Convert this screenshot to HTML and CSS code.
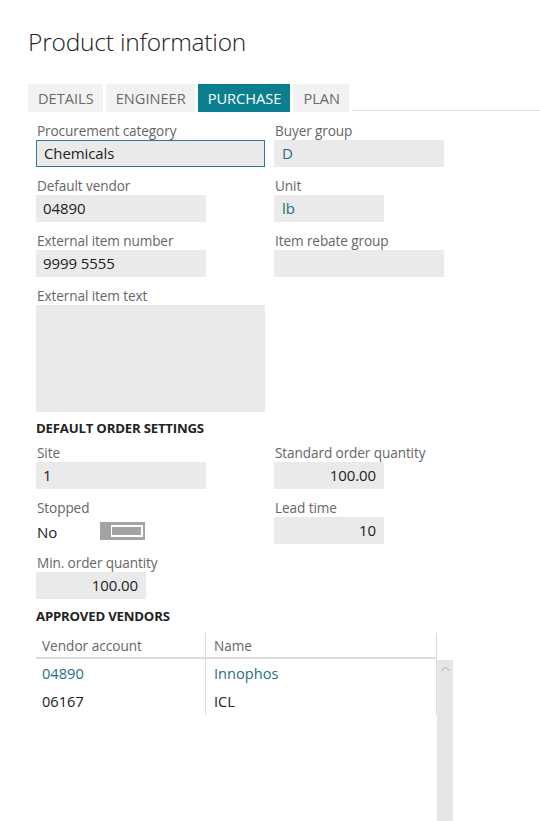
FILE: index.html
```html
<!DOCTYPE html>
<html>
<head>
<meta charset="utf-8">
<link rel="stylesheet" href="styles.css">
</head>
<body>
<div class="page">
  <h1 class="title">Product information</h1>
  <div class="tabs">
    <div class="tab">DETAILS</div>
    <div class="tab">ENGINEER</div>
    <div class="tab active">PURCHASE</div>
    <div class="tab">PLAN</div>
    <div class="tab-rule"></div>
  </div>

  <div class="form">
    <div class="grid">
      <div class="field">
        <div class="label">Procurement category</div>
        <div class="input w230 focused">Chemicals</div>
      </div>
      <div class="field">
        <div class="label">Buyer group</div>
        <div class="input w170 link">D</div>
      </div>
      <div class="field">
        <div class="label">Default vendor</div>
        <div class="input w170">04890</div>
      </div>
      <div class="field">
        <div class="label">Unit</div>
        <div class="input w110 link">lb</div>
      </div>
      <div class="field">
        <div class="label">External item number</div>
        <div class="input w170">9999 5555</div>
      </div>
      <div class="field">
        <div class="label">Item rebate group</div>
        <div class="input w170"></div>
      </div>
      <div class="field">
        <div class="label">External item text</div>
        <div class="input w230 textarea"></div>
      </div>
    </div>

    <div class="section">DEFAULT ORDER SETTINGS</div>

    <div class="grid grid2">
      <div class="field">
        <div class="label">Site</div>
        <div class="input w170">1</div>
      </div>
      <div class="field">
        <div class="label">Standard order quantity</div>
        <div class="input w110 num">100.00</div>
      </div>
      <div class="field">
        <div class="label">Stopped</div>
        <div class="toggle-row">
          <span class="toggle-text">No</span>
          <span class="toggle"><span class="toggle-track"></span></span>
        </div>
      </div>
      <div class="field">
        <div class="label">Lead time</div>
        <div class="input w110 num">10</div>
      </div>
      <div class="field">
        <div class="label">Min. order quantity</div>
        <div class="input w110 num">100.00</div>
      </div>
    </div>

    <div class="section sec2">APPROVED VENDORS</div>

    <div class="table-wrap">
      <div class="table">
        <div class="row head">
          <div class="cell c1">Vendor account</div>
          <div class="cell c2">Name</div>
        </div>
        <div class="row">
          <div class="cell c1 link">04890</div>
          <div class="cell c2 link">Innophos</div>
        </div>
        <div class="row">
          <div class="cell c1">06167</div>
          <div class="cell c2">ICL</div>
        </div>
      </div>
      <div class="scrollbar">
        <svg class="chev" width="9" height="6" viewBox="0 0 9 6"><path d="M0.5 5 L4.5 1 L8.5 5" fill="none" stroke="#a8a8a8" stroke-width="1"/></svg>
      </div>
    </div>
  </div>
</div>
</body>
</html>
```

FILE: styles.css
```css
* { box-sizing: border-box; }
html, body { margin: 0; padding: 0; background: #fff; }
body {
  font-family: "Open Sans", "Noto Sans", sans-serif;
  color: #222;
  width: 540px;
  height: 821px;
  overflow: hidden;
}
.page { padding: 0 0 0 28px; }
.title {
  margin: 0;
  padding-top: 25px;
  height: 84px;
  font-weight: 300;
  font-size: 24.5px;
  line-height: 34px;
  color: #222;
  letter-spacing: -0.2px;
}
.tabs {
  display: flex;
  align-items: stretch;
  height: 28px;
  gap: 3px;
}
.tab {
  background: #f2f2f2;
  color: #6b6b6b;
  font-size: 14.6px;
  line-height: 28px;
  padding: 0 9px 0 10px;
  letter-spacing: 0;
}
.tab.active { background: #0b7f90; color: #fff; }
.tab-rule {
  flex: 1;
  border-bottom: 1px solid #e3e3e3;
  margin-bottom: 1px;
}
.form { padding: 9px 0 0 8px; }
.grid {
  display: grid;
  grid-template-columns: 238px 1fr;
  row-gap: 9px;
}
.field { display: flex; flex-direction: column; align-items: flex-start; }
.label {
  font-size: 13.6px;
  line-height: 19px;
  color: #666;
  padding-left: 1px;
  letter-spacing: -0.1px;
}
.input {
  height: 27px;
  background: #eaeaea;
  font-size: 15px;
  line-height: 27px;
  padding: 0 8px 0 7px;
  color: #222;
  letter-spacing: -0.1px;
}
.input.focused { border: 1px solid #2a7d8e; line-height: 25px; padding-left: 7px; }
.w230 { width: 229px; }
.w170 { width: 170px; }
.w110 { width: 110px; }
.num { text-align: right; }
.link { color: #1f6e82; }
.input.link { padding-left: 8px; }
.textarea { height: 107px; }
.section {
  font-size: 13.2px;
  font-weight: 700;
  color: #222;
  line-height: 19px;
  margin: 7px 0 5px;
  letter-spacing: -0.2px;
}
.sec2 { margin: 8px 0 7px; }
.toggle-row {
  height: 27px;
  display: flex;
  align-items: center;
  width: 170px;
}
.toggle-text {
  font-size: 15px;
  width: 64px;
  padding-left: 1px;
  padding-top: 3px;
}
.toggle {
  width: 45px;
  height: 18px;
  background: #a3a3a3;
  position: relative;
  display: block;
}
.toggle-track {
  position: absolute;
  left: 11px;
  top: 3px;
  width: 32px;
  height: 12px;
  border: 2px solid #fff;
  border-left-width: 1px;
}
.table-wrap { display: flex; width: 417px; height: 189px; }
.table {
  width: 401px;
  align-self: flex-start;
  border-right: 1px solid #dcdcdc;
}
.row { display: flex; height: 28px; }
.row.head { height: 26px; border-bottom: 2px solid #dcdcdc; }
.cell { font-size: 14.6px; line-height: 28px; }
.head .cell { color: #666; line-height: 26px; font-size: 13.6px; }
.c1 { width: 170px; padding-left: 6px; border-right: 1px solid #dcdcdc; }
.c2 { flex: 1; padding-left: 8px; }
.scrollbar {
  width: 16px;
  margin-top: 27px;
  background: #e6e6e6;
  display: flex;
  justify-content: center;
  padding-top: 6px;
  height: 200px;
}
.chev { display: block; }
```
